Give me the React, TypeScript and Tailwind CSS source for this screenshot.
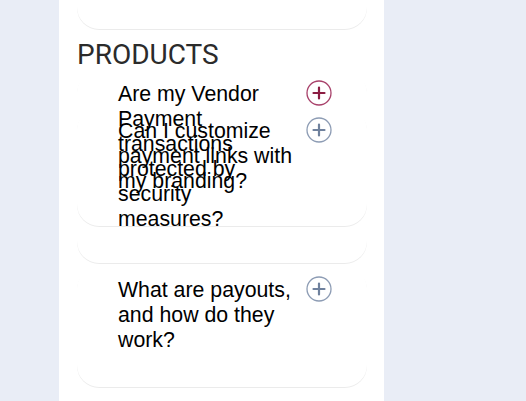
const faqs = [
  { q: "Are my Vendor Payment transactions protected by security measures?", active: true, box: "h-[155px]" },
  { q: "Can I customize payment links with my branding?", active: false, box: "h-[155px] -mt-[118px]" },
  { q: "What are payouts, and how do they work?", active: false, box: "h-[120px] mt-[4px]" },
];

const PlusIcon = ({ active }: { active: boolean }) => (
  <svg width="26" height="26" viewBox="0 0 26 26" fill="none" className="shrink-0 -mt-[2px]">
    <circle cx="13" cy="13" r="12" stroke={active ? "#a8416a" : "#8d9cb4"} strokeWidth="1.3" />
    <path
      d="M13 7.5v11M7.5 13h11"
      stroke={active ? "#8b1c42" : "#6f819d"}
      strokeWidth="2.2"
      strokeLinecap="round"
    />
  </svg>
);

export default function App() {
  return (
    <div className="w-full h-[401px] bg-[#e9edf6] overflow-hidden">
      <div className="ml-[59px] w-[325px] h-full bg-white pl-[18px]">
        {/* previous section card */}
        <div className="w-[290px] h-[29px] rounded-b-[22px] shadow-[0_1px_0_rgba(0,0,0,0.08)]" />

        <h2 className="mt-[10px] text-[28px] leading-[32px] text-[#2b2b2b] font-['Roboto',sans-serif]">
          PRODUCTS
        </h2>

        {faqs.map((item) => (
          <div
            key={item.q}
            className={`w-[290px] ${item.box} rounded-[22px] shadow-[0_1px_0_rgba(0,0,0,0.08)] flex items-start justify-between pt-[11px] pl-[41px] pr-[35px]`}
          >
            <p className="w-[180px] text-[21.3px] leading-[25px] text-black font-['Liberation_Sans',Arial,sans-serif]">
              {item.q}
            </p>
            <PlusIcon active={item.active} />
          </div>
        ))}
      </div>
    </div>
  );
}
